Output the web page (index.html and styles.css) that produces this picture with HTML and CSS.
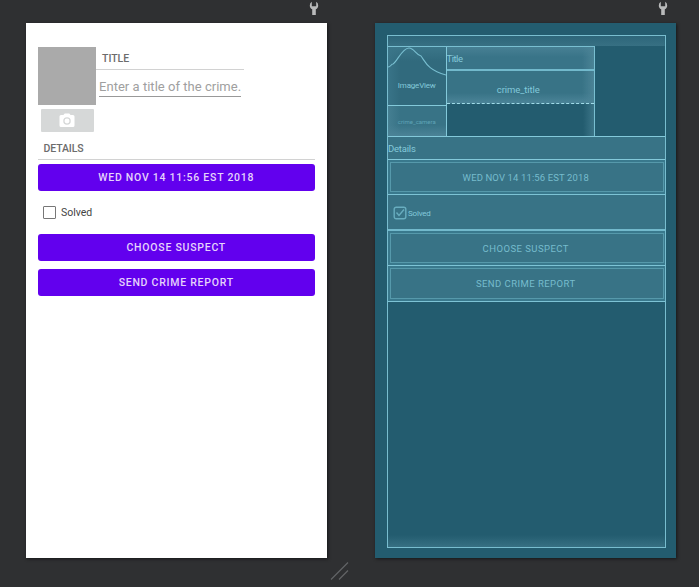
FILE: index.html
```html
<!DOCTYPE html>
<html lang="en">
<head>
<meta charset="utf-8">
<title>Layout editor</title>
<link rel="stylesheet" href="styles.css">
</head>
<body>
<main class="editor">
  <section class="surface">
    <header class="tools"><svg class="wrench" viewBox="0 0 10 15"><path d="M2.800 .8A4.200 4.200 0 0 0 .8 4.400c0 1.800.8 3.200 2.400 3.900V14h3.600V8.300c1.600-.7 2.400-2.100 2.400-3.900A4.200 4.200 0 0 0 7.200.8v4.400H2.800z"/></svg></header>
    <div class="phone design">
      <div class="crime">
        <div class="media">
          <div class="photo"></div>
          <button class="camera"><svg viewBox="0 0 24 24"><path fill-rule="evenodd" d="M9 2 7.200 4H4a2 2 0 0 0-2 2v12a2 2 0 0 0 2 2h16a2 2 0 0 0 2-2V6a2 2 0 0 0-2-2h-3.200L15 2zM12 17a5 5 0 1 1 0-10 5 5 0 0 1 0 10z"/><circle cx="12" cy="12" r="3.300"/></svg></button>
        </div>
        <div class="fields">
          <h2 class="heading title"><span>TITLE</span></h2>
          <div class="hint"><span>Enter a title of the crime.</span></div>
        </div>
      </div>
      <h2 class="heading details"><span>DETAILS</span></h2>
      <button class="filled date"><span>WED NOV 14 11:56 EST 2018</span></button>
      <label class="solved"><i class="box"></i><span>Solved</span></label>
      <button class="filled suspect"><span>CHOOSE SUSPECT</span></button>
      <button class="filled report"><span>SEND CRIME REPORT</span></button>
    </div>
  </section>
  <section class="surface">
    <header class="tools"><svg class="wrench" viewBox="0 0 10 15"><path d="M2.800 .8A4.200 4.200 0 0 0 .8 4.400c0 1.800.8 3.200 2.400 3.900V14h3.600V8.300c1.600-.7 2.400-2.100 2.400-3.900A4.200 4.200 0 0 0 7.200.8v4.400H2.800z"/></svg></header>
    <div class="phone blueprint">
      <div class="root">
        <div class="bp-row">
          <div class="bp-media">
            <div class="bp-image"><svg viewBox="0 0 58 58"><path d="M0 20C3 20 3 17 5 17 9 15 14 1 21 1c5 0 7 7 12 8 5 7 7 14 25 19"/></svg><span>ImageView</span></div>
            <div class="bp-camera"><span>crime_camera</span></div>
          </div>
          <div class="bp-fields">
            <div class="bp-title"><span>Title</span></div>
            <div class="bp-edit"><span>crime_title</span></div>
          </div>
        </div>
        <div class="bp-details"><span>Details</span></div>
        <div class="bp-button"><div class="bp-inner bp-date"><span>WED NOV 14 11:56 EST 2018</span></div></div>
        <div class="bp-solved"><svg viewBox="0 0 14 14"><rect x="1.200" y="1.200" width="11.600" height="11.600" rx="2"/><path d="M3.500 6.500 6 9.500 11 3.500"/></svg><span>Solved</span></div>
        <div class="bp-button"><div class="bp-inner bp-suspect"><span>CHOOSE SUSPECT</span></div></div>
        <div class="bp-button"><div class="bp-inner bp-report"><span>SEND CRIME REPORT</span></div></div>
        <div class="bp-space"></div>
      </div>
    </div>
  </section>
  <svg class="grip" viewBox="0 0 20 20"><path d="M1 18.500 18 1.500M9 18.500 18 9.500"/></svg>
</main>
</body>
</html>
```

FILE: styles.css
```css
* { box-sizing: border-box; }
body { margin: 0; background: #2f3032; font-family: Roboto, sans-serif; }
button { border: 0; padding: 0; font-family: inherit; display: flex; align-items: center; justify-content: center; }
span { white-space: nowrap; }

.editor { position: relative; width: 699px; height: 587px; display: flex; gap: 47.5px; padding-left: 26px; overflow: hidden; }
.surface { width: 301px; }
.tools { height: 23px; display: flex; justify-content: flex-end; padding: 1px 8px 0 0; }
.wrench { width: 10px; height: 15px; fill: #b9babb; }
.phone { height: 535px; box-shadow: 1px 1px 3px #161718; }
.grip { position: absolute; left: 330px; top: 561px; width: 20px; height: 20px; fill: none; stroke: #626466; stroke-width: 1.2; }

.design { background: #fff; padding: 23.5px 12px 0 11.5px; }
.crime { display: flex; height: 90px; }
.media { width: 58.5px; }
.photo { height: 58.5px; background: #aaa; }
.camera { width: 53px; height: 23px; margin: 4px 0 0 3px; background: #d6d8d8; border-radius: 1px; }
.camera svg { width: 18px; height: 18px; fill: #fff; }
.fields { width: 148px; }
.heading { margin: 0; font-size: 10.5px; font-weight: 500; color: #6c6c6c; display: flex; align-items: center; padding: 2px 0 0 6px; border-bottom: 1px solid #d2d2d2; }
.title { height: 23px; }
.hint { height: 27px; margin: 0 3px; border-bottom: 1px solid #999; display: flex; align-items: center; padding-top: 7px; font-size: 13px; color: #a0a0a0; letter-spacing: .03px; }
.details { height: 23px; letter-spacing: -.1px; }
.filled { width: 100%; height: 27.5px; border-radius: 3px; background: #6200ee; color: #e5d3fb; font-size: 10.5px; font-weight: 500; letter-spacing: .75px; padding-top: 1px; }
.date { margin-top: 4px; }
.solved { height: 42.5px; display: flex; align-items: center; padding: 1px 0 0 5.5px; gap: 5px; font-size: 10.5px; color: #444; }
.box { width: 13px; height: 13px; border: 1.5px solid #777; border-radius: 1px; }
.report { margin-top: 7.5px; }

.blueprint { background: #235c6f; padding: 12px 10px 10px 12.5px; color: #83c9da; }
.root { height: 513px; border: 1px solid #78bdcf; display: flex; flex-direction: column; padding-top: 10px; background: linear-gradient(#2d667a, #377083) top / 100% 10px no-repeat; }
.bp-row { display: flex; width: 207px; height: 91px; border: solid #79bfd1; border-width: 1px 1px 0 0; background: linear-gradient(90deg, transparent, #3c7588) right / 11px 100% no-repeat; }
.bp-media { width: 58.5px; border-right: 1px solid #83c9da; }
.bp-image { position: relative; height: 59px; background: linear-gradient(#3b7689, transparent 14px), linear-gradient(90deg, #397488, #316a7d 12px); border-bottom: 1px solid #83c9da; display: flex; justify-content: center; padding-top: 34px; font-size: 8px; letter-spacing: -.2px; }
.bp-image svg { position: absolute; left: 0; top: 0; width: 58px; height: 58px; fill: none; stroke: #79bfd1; stroke-width: 1.1; }
.bp-camera { height: 30px; display: flex; justify-content: center; align-items: center; background: linear-gradient(transparent 19px, #4b8397), linear-gradient(90deg, #457f92, #387386 12px); font-size: 6px; color: #5fa4b7; }
.bp-fields { width: 147.5px; height: 57px; }
.bp-title { height: 24px; display: flex; align-items: center; border-bottom: 2px solid #72b9cc; background: linear-gradient(90deg, transparent 135px, #4b8396), linear-gradient(#478094, #397488 10px); font-size: 9.5px; letter-spacing: -.5px; }
.bp-edit { height: 33px; display: flex; align-items: center; justify-content: center; padding: 5px 4px 0 0; border-bottom: 1px dashed #a0dbe8; background: linear-gradient(90deg, transparent 135px, #4b8396), linear-gradient(#387386 22px, #4b8498); font-size: 9.5px; letter-spacing: -.1px; }
.bp-details { height: 24px; margin-top: -1px; flex: none; display: flex; align-items: center; background: #387386; border: solid #83c9da; border-width: 1px 0; font-size: 9.5px; letter-spacing: -.2px; }
.bp-button { height: 35.4px; flex: none; padding: 2px 1px 2px 2px; background: #39798d; border-bottom: 1px solid #7dc3d5; }
.bp-inner { height: 100%; border: 1px solid #5699ab; background: #387386; display: flex; align-items: center; justify-content: center; font-size: 9.5px; color: #76bccd; letter-spacing: .12px; padding-right: 2px; }
.bp-suspect { letter-spacing: .45px; padding-top: 1px; }
.bp-report { letter-spacing: .45px; }
.bp-solved { height: 35.4px; flex: none; display: flex; align-items: center; gap: 1px; padding: 2px 0 0 5px; background: #387386; border-bottom: 2px solid #72b9cc; font-size: 8px; letter-spacing: -.2px; }
.bp-solved svg { width: 14px; height: 14px; fill: none; stroke: #68adbf; stroke-width: 1.4; }
.bp-space { flex: 1; background: linear-gradient(transparent, #377083) bottom / 100% 12px no-repeat; }
```
